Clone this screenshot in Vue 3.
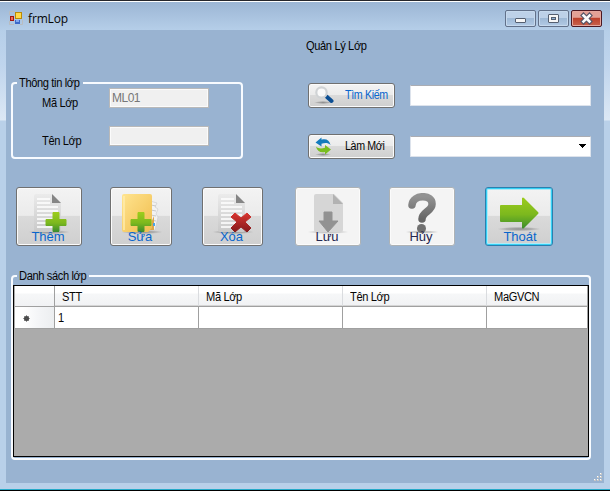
<script setup>
import { ref } from 'vue'

const classId = ref('ML01')
const className = ref('')
const columns = ['STT', 'Mã Lớp', 'Tên Lớp', 'MaGVCN']
const row = ['1', '', '', '']
const actions = [
  { key: 'add', label: 'Thêm', state: 'normal' },
  { key: 'edit', label: 'Sửa', state: 'normal' },
  { key: 'delete', label: 'Xóa', state: 'normal' },
  { key: 'save', label: 'Lưu', state: 'disabled' },
  { key: 'cancel', label: 'Hủy', state: 'disabled' },
  { key: 'exit', label: 'Thoát', state: 'focused' }
]
</script>

<template>
  <div class="window">
    <svg class="defs" width="0" height="0">
      <defs>
        <linearGradient id="green" x1="0" y1="0" x2="0" y2="1">
          <stop offset="0" stop-color="#9ccc1c" /><stop offset=".55" stop-color="#7cb81e" /><stop offset="1" stop-color="#3b8d2c" />
        </linearGradient>
        <linearGradient id="red" x1="0" y1="0" x2="0" y2="1">
          <stop offset="0" stop-color="#d93630" /><stop offset="1" stop-color="#84191c" />
        </linearGradient>
        <linearGradient id="folder" x1="0" y1="0" x2="1" y2="1">
          <stop offset="0" stop-color="#ffe48f" /><stop offset="1" stop-color="#f0bd4e" />
        </linearGradient>
        <linearGradient id="paper" x1="0" y1="0" x2="0" y2="1">
          <stop offset="0" stop-color="#ebebeb" /><stop offset="1" stop-color="#c9c9c9" />
        </linearGradient>
        <linearGradient id="gray" x1="0" y1="0" x2="0" y2="1">
          <stop offset="0" stop-color="#929292" /><stop offset="1" stop-color="#666" />
        </linearGradient>
        <radialGradient id="shade">
          <stop offset="0" stop-color="#777" stop-opacity=".75" /><stop offset=".6" stop-color="#888" stop-opacity=".5" /><stop offset="1" stop-color="#999" stop-opacity="0" />
        </radialGradient>
      </defs>
    </svg>

    <header class="titlebar">
      <svg class="appicon" width="14" height="14" viewBox="0 0 14 14">
        <path d="M.5 4V.5H6M.5 10v3.500H5M13.500 9v4.500H11" fill="none" stroke="#b9bcbf" />
        <rect x="6.500" y="1.500" width="6" height="6" fill="#ffd94a" stroke="#b98a06" />
        <rect x="1.500" y="5.500" width="3" height="4" fill="#f0685a" stroke="#a3170f" />
        <rect x="6" y="9" width="5" height="4" fill="#3b68c9" /><rect x="7" y="9" width="3" height="2" fill="#83a8ee" />
      </svg>
      <span class="title">frmLop</span>
      <div class="caption">
        <i class="cap"><svg width="29" height="15"><rect x="9.500" y="7.500" width="10" height="4" rx=".5" fill="#f6f6f6" stroke="#555f70" /></svg></i>
        <i class="cap"><svg width="29" height="15"><rect x="9.500" y="3.500" width="10" height="8" rx=".5" fill="#f6f6f6" stroke="#555f70" /><rect x="12.500" y="6.500" width="4" height="2" fill="#8fb0d2" stroke="#555f70" /></svg></i>
        <i class="cap close"><svg width="29" height="15"><path d="M11.500 4.500l6 6m0-6l-6 6" stroke="#565466" stroke-width="4.800" stroke-linecap="square" /><path d="M11.500 4.500l6 6m0-6l-6 6" stroke="#fafafa" stroke-width="2.600" stroke-linecap="square" /></svg></i>
      </div>
    </header>

    <main class="client">
      <section class="top">
        <fieldset class="group info">
          <legend class="l-info"><span class="t">Thông tin lớp</span></legend>
          <label class="field"><span class="t">Mã Lớp</span><span class="disabledbox">{{ classId }}</span></label>
          <label class="field second"><span class="t">Tên Lớp</span><span class="disabledbox">{{ className }}</span></label>
        </fieldset>
        <div class="search">
          <h1><span class="t">Quản Lý Lớp</span></h1>
          <div class="line">
            <button class="btn small find">
              <svg width="20" height="18" viewBox="0 0 20 18">
                <ellipse cx="9" cy="16.500" rx="9" ry="1.500" fill="url(#shade)" />
                <path d="M12.500 10.500l5 4.500" stroke="#0b4e93" stroke-width="4" stroke-linecap="round" />
                <circle cx="7.500" cy="6.500" r="5.200" fill="#fafafa" stroke="#d0d3d5" stroke-width="2.200" />
              </svg>
              <span class="t">Tìm Kiếm</span>
            </button>
            <div class="input"></div>
          </div>
          <div class="line last">
            <button class="btn small">
              <svg width="20" height="19" viewBox="0 0 20 19">
                <ellipse cx="9" cy="17.500" rx="8" ry="1.500" fill="url(#shade)" />
                <path d="M1.500 5.500L7.500 .5v2.200c5-1.200 8 .8 9 5.300-2.500-2.200-5-2.500-9-1.300V9.500z" fill="#147bbd" />
                <path d="M17 12.500l-6 5v-2.400c-5 .8-8-1-9-5.600 2.500 2.200 5 2.400 9 1.300V8z" fill="#79bd20" />
              </svg>
              <span class="t">Làm Mới</span>
            </button>
            <div class="input combo"><svg width="7" height="4"><path d="M0 0h7v1H6v1H5v1H4v1H3V3H2V2H1V1H0z" fill="#000" /></svg></div>
          </div>
        </div>
      </section>

      <section class="actions">
        <button v-for="a in actions" :key="a.key" class="btn big" :class="[a.state, a.key]">
          <svg v-if="a.key === 'add' || a.key === 'delete'" width="46" height="42" viewBox="0 0 46 42">
            <ellipse cx="23" cy="39" rx="21" ry="2.200" fill="url(#shade)" />
            <path d="M10 1h16l9 9v27q0 2-2 2H10q-2 0-2-2V3q0-2 2-2z" fill="url(#paper)" />
            <path d="M26 1l9 9h-9z" fill="#858585" />
            <path d="M11 6h13M11 10h13M11 14h21M11 18h21M11 22h21M11 26h21M11 30h21M11 34h21" stroke="#fff" stroke-width="1.700" />
            <path v-if="a.key === 'add'" d="M27 19.500h6v7h7v6h-7v6h-6v-6h-7v-6h7z" fill="url(#green)" stroke="url(#green)" stroke-linejoin="round" />
            <path v-else d="M21 24l4-4 6 5 6-5 4 4-6 5 6 6-4 4-6-5-6 5-4-4 6-6z" fill="url(#red)" stroke="url(#red)" stroke-linejoin="round" />
          </svg>
          <svg v-else-if="a.key === 'edit'" width="46" height="42" viewBox="0 0 46 42">
            <ellipse cx="24" cy="39" rx="21" ry="2.200" fill="url(#shade)" />
            <path d="M32 8l7 2-2 4 3 2-2 5 2 3-3 13h-6z" fill="#f2f2f2" stroke="#c9c9c9" stroke-width=".6" />
            <path d="M33 12l5 1m-5 4l5 1m-5 4l5 1m-5 4l5 1" stroke="#c8c8c8" />
            <path d="M36 23v14h-6" fill="#dca74a" /><path d="M36 30v3" stroke="#4aa3e5" stroke-width="2" />
            <path d="M6 1h26q2 0 2 2v32l-4 4H6q-2 0-2-2V3q0-2 2-2z" fill="url(#folder)" />
            <path d="M6 3v34" stroke="#ffecad" stroke-width="1.500" />
            <path d="M20 19.500h6v7h7v6h-7v6h-6v-6h-7v-6h7z" fill="url(#green)" stroke="url(#green)" stroke-linejoin="round" />
          </svg>
          <svg v-else-if="a.key === 'save'" width="46" height="42" viewBox="0 0 46 42">
            <ellipse cx="23" cy="39" rx="21" ry="2" fill="url(#shade)" opacity=".6" />
            <path d="M11 1h18l9 9v27q0 2-2 2H11q-2 0-2-2V3q0-2 2-2z" fill="#d6d6d6" />
            <path d="M28 1l10 10H28z" fill="#b2b2b2" />
            <path d="M19 19h8v9h6L23 39 14 28h5z" fill="#929292" stroke="#929292" stroke-linejoin="round" />
          </svg>
          <svg v-else-if="a.key === 'cancel'" width="46" height="42" viewBox="0 0 46 42">
            <ellipse cx="23" cy="39" rx="17" ry="1.800" fill="url(#shade)" opacity=".7" />
            <path d="M13 12C14 1 34 1 33 11.500c0 6.500-10 7.500-10 14.500" fill="none" stroke="url(#gray)" stroke-width="7.500" stroke-linecap="round" />
            <circle cx="22.500" cy="35.500" r="4.500" fill="#707070" />
          </svg>
          <svg v-else width="46" height="42" viewBox="0 0 46 42">
            <ellipse cx="23" cy="36" rx="22" ry="2.200" fill="url(#shade)" />
            <path d="M5 12h21V5q1-1 2 0l14 14q1 1 0 2L28 35q-1 1-2 0v-6H5q-1 0-1-1V13q0-1 1-1z" fill="url(#green)" />
          </svg>
          <span class="biglabel">{{ a.label }}</span>
        </button>
      </section>

      <fieldset class="group list">
        <legend class="l-list"><span class="t">Danh sách lớp</span></legend>
        <div class="grid">
          <div class="gridrow head">
            <div class="corner"></div>
            <div v-for="c in columns" :key="c" class="cell"><span class="t">{{ c }}</span></div>
          </div>
          <div class="gridrow">
            <div class="rowhead"><svg width="7" height="7"><circle cx="3.500" cy="3.500" r="2.500" fill="#3a3a3a" /><path d="M3.500 0v7M0 3.500h7M1 1l5 5M6 1L1 6" stroke="#555" stroke-width=".6" /></svg></div>
            <div v-for="(v, i) in row" :key="i" class="cell"><span class="t">{{ v }}</span></div>
          </div>
        </div>
      </fieldset>
      <svg class="grip" width="9" height="9"><path d="M6 0h2v2H6zM3 3h2v2H3zM6 3h2v2H6zM0 6h2v2H0zM3 6h2v2H3zM6 6h2v2H6z" fill="#c8c7c5" /><path d="M6 0h1v1H6zM3 3h1v1H3zM6 3h1v1H6zM0 6h1v1H0zM3 6h1v1H3zM6 6h1v1H6z" fill="#fff" /></svg>
    </main>
  </div>
</template>

<style>
body { margin: 0; overflow: hidden; }
</style>

<style scoped>
* { box-sizing: border-box; }
.window {
  width: 610px; height: 491px; display: flex; flex-direction: column; padding: 0 6px 8px;
  color: #050505; font: 12px/16px "Liberation Sans", Arial, sans-serif;
  border-top: 1px solid #25262c;
  background:
    linear-gradient(#000, #000) 0 100% / 100% 1px no-repeat,
    linear-gradient(#26aac9, #26aac9) 0 calc(100% - 1px) / 100% 1px no-repeat,
    linear-gradient(#fff, #fff) 0 0 / 100% 1px no-repeat,
    linear-gradient(#9bb5d4 0, #b6cfe9 30px, #c0d5ed 65px, #dce8f5 119px, #b9d0e9 120px, #b9d0e9 100%);
}
.defs { position: absolute; }
svg { display: block; flex: none; }
.t { display: inline-block; white-space: nowrap; letter-spacing: -0.4px; transform: scaleX(.925); transform-origin: 0 50%; }
.titlebar { height: 29px; flex: none; display: flex; align-items: flex-start; padding-left: 3px; }
.appicon { margin-top: 10px; }
.title { font: 12px/16px "Open Sans", "Noto Sans", sans-serif; margin: 10px 0 0 5px; letter-spacing: -.15px; }
.caption { display: flex; gap: 2px; margin: 9px 2px 0 auto; }
.cap { width: 31px; height: 17px; border: 1px solid #62718a; border-radius: 2px; box-shadow: inset 0 0 0 1px #c6d9ed; background: linear-gradient(#bdd1e8 45%, #9eb9d6 50%, #b2cae5); }
.close { border-color: #4b1822; box-shadow: inset 0 0 0 1px #e5a79e; background: linear-gradient(#e4a196 42%, #bd402b 48%, #c8634e); }
.client { flex: 1; min-height: 0; background: #99b3d1; padding: 0 13px 0 5px; display: flex; flex-direction: column; position: relative; }
.top { height: 157px; display: flex; }
.group { margin: 0; padding: 0; min-width: 0; border: 2px solid #f8fbff; border-radius: 4px; }
.group legend { margin-left: 4px; padding: 0 0 0 2px; height: 16px; line-height: 16px; }
.l-info { width: 66px; }
.l-list { width: 72px; }
.info { width: 233px; height: 84px; margin-top: 45px; }
.field { display: grid; grid-template-columns: 67px 100px; padding-left: 29px; align-items: start; margin-top: -3px; height: 20px; }
.field .t { padding-top: 7px; }
.field.second { margin-top: 18px; }
.disabledbox { height: 20px; border: 1px solid #b9b9b9; box-shadow: inset 0 0 0 1px #fbfbfb; background: #f0f0f0; color: #777; line-height: 18px; padding-left: 2px; letter-spacing: -.5px; }
.search { width: 285px; margin-left: 64px; }
h1 { font-size: 12px; font-weight: 400; line-height: 16px; height: 16px; margin: 8px 0 0 -2px; }
.line { display: grid; grid-template-columns: 87px 181px; column-gap: 15px; align-items: center; height: 26px; margin: 28px 0 0; }
.search { padding-left: 1px; }
.last { margin-top: 25px; }
.btn { border: 1px solid #707070; border-radius: 3px; padding: 0; margin: 0; box-shadow: inset 0 0 0 1px #fbfbfb; background: linear-gradient(#f3f3f3 0, #ebebeb 48%, #dadada 50%, #cfcfcf); color: #080808; font: inherit; display: flex; }
.small { height: 25px; align-items: center; padding-left: 5px; }
.small .t { margin-left: 11px; transform: scaleX(.89); }
.find { color: #0966cc; }
.input { height: 21px; background: #fff; border: 1px solid #dde3ec; border-top-color: #abadb3; border-radius: 1px; }
.combo { display: flex; align-items: center; justify-content: flex-end; padding-right: 4px; }
.actions { height: 59px; display: grid; grid-template-columns: 94px 92px 93px 94px 96px 68px; margin-left: 5px; }
.big { width: 66px; height: 59px; flex-direction: column; align-items: center; padding-top: 5px; color: #0966cc; }
.big.edit { width: 62px; }
.big.delete { width: 61px; }
.big.exit { width: 68px; }
.biglabel { font: 13px/15px "Liberation Sans", Arial, sans-serif; margin-top: -6px; position: relative; left: -1px; }
.disabled { background: #f4f4f4; border-color: #adb2b5; color: #24264f; }
.focused { border-color: #2a7fae; box-shadow: inset 0 0 0 1px #34d0f5, inset 0 0 0 2px #b2eaf6; }
.exit .biglabel { left: 1px; }
.list { width: 580px; height: 192px; margin-top: 22px; }
.grid { width: 576px; height: 172px; margin-top: 1px; border: 1px solid #000; background: #ababab; }
.gridrow { display: grid; grid-template-columns: 40px 144px 144px 144px 1fr; height: 22px; border-bottom: 1px solid #a0a0a0; border-right: 1px solid #a0a0a0; margin-left: 1px; }
.cell { background: #fff; border-right: 1px solid #a0a0a0; padding: 3px 0 0 3px; height: 21px; }
.cell:last-child { border-right: 0; }
.head { height: 21px; }
.head .cell { height: 20px; padding: 3px 0 0 7px; background: linear-gradient(#fff 35%, #f6f7f8 40%, #f1f2f4); border-right-color: #dadcdf; box-shadow: inset 0 -1px #d5d5d5; }
.corner, .rowhead { background: linear-gradient(90deg, #fff 20%, #f4f5f7 60%, #eceef0); border-right: 1px solid #a0a0a0; }
.corner { background: linear-gradient(#fff 35%, #f6f7f8 40%, #f1f2f4); }
.rowhead { display: flex; align-items: center; padding: 2px 0 0 8px; }
.grip { position: absolute; right: 1px; bottom: 1px; }
</style>
